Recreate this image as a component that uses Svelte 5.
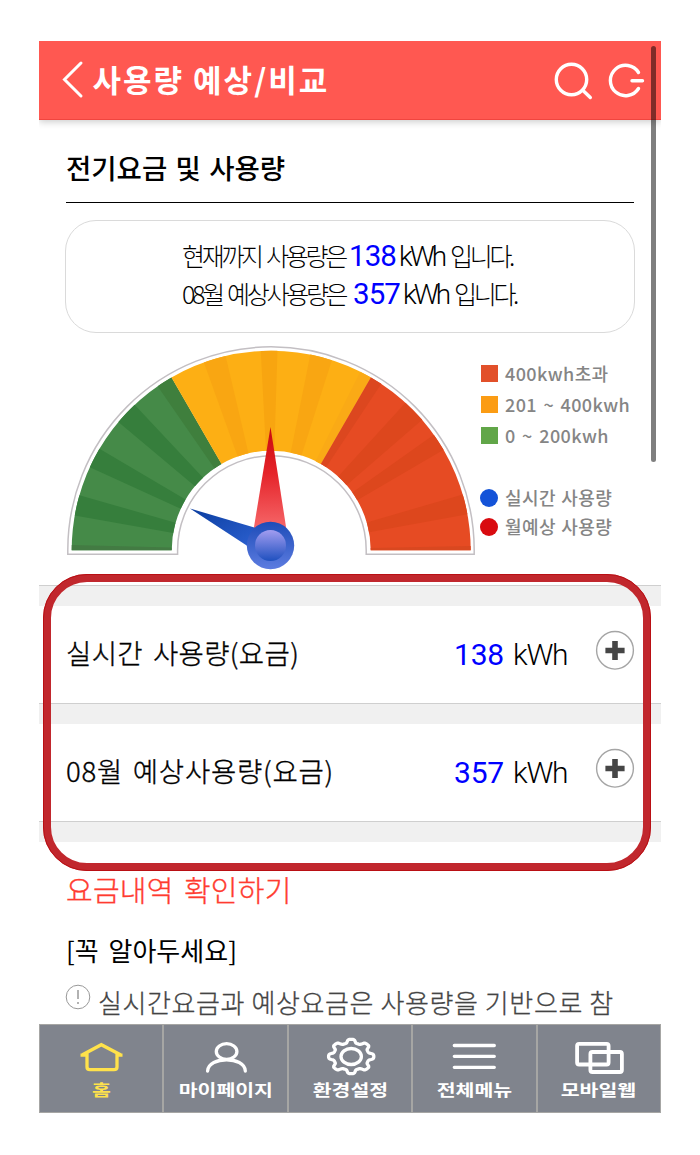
<script>
  const cx = 271.2, cy = 550.2;
  const pt = (r, deg) => {
    const a = (deg * Math.PI) / 180;
    return `${(cx - r * Math.cos(a)).toFixed(2)} ${(cy - r * Math.sin(a)).toFixed(2)}`;
  };
  const sector = (a, b, ro = 199.5, ri = 99.5) =>
    `M${pt(ro, a)}A${ro} ${ro} 0 0 1 ${pt(ro, b)}L${pt(ri, b)}A${ri} ${ri} 0 0 0 ${pt(ri, a)}Z`;

  const sectors = [
    [0, 60, '#458a48'], [0, 1.5, '#437b43'], [10, 16, '#367e3c'], [24.6, 30.6, '#367e3c'], [40, 46.8, '#367e3c'], [55.3, 60, '#3f7f3d'],
    [60, 120, '#fdaf14'], [70.3, 76.8, '#f9a612'], [87, 91.8, '#f8a510'], [101.3, 107.7, '#f9a612'], [116.5, 120, '#faaa16'],
    [120, 180, '#e64b23'], [120, 123.5, '#dc471f'], [132.3, 139.2, '#dd471d'], [144.6, 149.8, '#dd471d'], [163.8, 169.6, '#dd471d'], [178.8, 180, '#d94820']
  ];
  const frame = `M67.8 554.3V550A203.2 203.2 0 0 1 474.2 550V554.3H366.2V550A94.3 94.3 0 0 0 177.6 550V554.3Z`;

  let gear = '';
  for (let i = 0; i < 160; i++) {
    const t = (i / 160) * Math.PI * 2;
    const k = 0.865 + 0.105 * Math.tanh(2 * Math.cos(8 * t));
    gear += `${i ? 'L' : 'M'}${(351 + 23.4 * k * Math.cos(t)).toFixed(2)} ${(1056 + 17.8 * k * Math.sin(t)).toFixed(2)}`;
  }
  gear += 'Z';

  const legend = [
    { c: '#e2502a', t: '400kwh초과' },
    { c: '#fb9c14', t: '201 ~ 400kwh' },
    { c: '#61a648', t: '0 ~ 200kwh' }
  ];
  const dots = [
    { c: '#1453d8', t: '실시간 사용량' },
    { c: '#d90b10', t: '월예상 사용량' }
  ];
  const rows = [
    { label: '실시간 사용량(요금)', value: '138' },
    { label: '08월 예상사용량(요금)', value: '357' }
  ];
  const tabs = ['홈', '마이페이지', '환경설정', '전체메뉴', '모바일웹'];
</script>

<div class="screen">
  <header>
    <svg class="back" width="24" height="40" viewBox="61 61 24 40"><path d="M81 64L64.5 80.5L81 97" /></svg>
    <h1>사용량 예상/비교</h1>
    <svg class="tools" width="94" height="44" viewBox="551 58 94 44">
      <circle cx="571.5" cy="79.5" r="15.2" /><path d="M583 90.5L590.3 97.5" />
      <path d="M638.5 72.5A15.2 15.2 0 1 0 638.5 88.5M632 80.7H642.5" />
    </svg>
  </header>

  <main>
    <h2>전기요금 및 사용량</h2>
    <div class="summary">
      <p><span class="s1">현재까지 사용량은</span><b>138</b><i>kWh</i><span>입니다.</span></p>
      <p><span class="s2">08월 예상사용량은</span><b>357</b><i>kWh</i><span>입니다.</span></p>
    </div>

    <div class="chart">
      <svg width="414" height="245" viewBox="66 340 414 245">
        <defs>
          <linearGradient id="red" x1="0" y1="0" x2="0" y2="1"><stop offset="0" stop-color="#c9080c" /><stop offset=".45" stop-color="#e5242a" /><stop offset="1" stop-color="#f6686a" /></linearGradient>
          <linearGradient id="hub" x1="0" y1="0" x2="0" y2="1"><stop offset="0" stop-color="#1d4cb8" /><stop offset="1" stop-color="#5d7ce0" /></linearGradient>
          <linearGradient id="knob" x1="0" y1="0" x2="0" y2="1"><stop offset="0" stop-color="#a29df0" /><stop offset="1" stop-color="#1f50bf" /></linearGradient>
          <linearGradient id="blue" x1="0" y1="0" x2="1" y2="1"><stop offset="0" stop-color="#0b3ea0" /><stop offset="1" stop-color="#2c60d0" /></linearGradient>
        </defs>
        <path d={frame} fill="#fff" stroke="#c3bfc3" stroke-width="1.5" />
        {#each sectors as [a, b, c]}<path d={sector(a, b)} fill={c} />{/each}
        <path d="M270.5 427L286.5 530H253.5Z" fill="url(#red)" />
        <path d="M190 508.5L256 528L249 547Z" fill="url(#blue)" />
        <circle cx="270.5" cy="545.5" r="23.7" fill="url(#hub)" />
        <circle cx="270.5" cy="545.5" r="15.5" fill="url(#knob)" />
      </svg>
      <ul>
        {#each legend as l}<li><em style:background={l.c}></em>{l.t}</li>{/each}
        {#each dots as l, i}<li class="dot" class:first={i === 0}><em style:background={l.c}></em>{l.t}</li>{/each}
      </ul>
    </div>

    {#each rows as r, i}
      <div class="band"></div>
      <div class="row">
        <span class="label" class:wide={i === 1}>{r.label}</span><b>{r.value}</b><i>kWh</i>
        <svg width="40" height="42" viewBox="0 0 40 42"><ellipse cx="20" cy="20.3" rx="18.4" ry="18.8" fill="#fff" stroke="#a5a5a5" stroke-width="1.4" /><path d="M20 11V30M10.4 20.5H29.6" stroke="#464646" stroke-width="5.6" /></svg>
      </div>
    {/each}
    <div class="band"></div>
    <div class="link">요금내역 확인하기</div>
    <h3>[꼭 알아두세요]</h3>
    <div class="note">
      <svg width="26" height="26" viewBox="0 0 26 26"><circle cx="13" cy="13" r="11.8" fill="none" stroke="#999" /><path d="M13 6V15M13 18V20" stroke="#999" stroke-width="1.5" /></svg>
      <span>실시간요금과 예상요금은 사용량을 기반으로 참</span>
    </div>
  </main>

  <nav>
    {#each tabs as t, i}
      <div class="tab" class:on={i === 0}>
        <svg width="122" height="42" viewBox="{40 + i * 124.4} 1034.5 122 42">
          {#if i === 0}<path d="M80.5 1054.6H87M122.5 1054.6H116M82.5 1054.3L101.3 1044.2L120.5 1054.3M87 1053V1066.5Q87 1069.2 90 1069.2H114Q117 1069.2 117 1066.5V1053" />
          {:else if i === 1}<ellipse cx="226" cy="1051" rx="10.3" ry="7.8" /><path d="M207 1070.5C208 1055.5 244 1055.5 244.7 1070.5" stroke-linecap="round" />
          {:else if i === 2}<path d={gear} /><ellipse cx="351" cy="1056" rx="10.2" ry="8" />
          {:else if i === 3}<path d="M454.5 1045H494.5M454.5 1055.8H494.5M454.5 1066.8H494.5" stroke-linecap="round" />
          {:else}<g stroke-width="3.8"><rect x="576.7" y="1043.3" width="31.5" height="20.7" rx="2" /><rect x="590" y="1051.5" width="31.5" height="20" rx="2" /></g>{/if}
        </svg>
        <span>{t}</span>
      </div>
    {/each}
  </nav>

  <div class="scrollbar"></div>
  <div class="highlight"></div>
</div>

<style>
  :global(body) { background: #fff; }
  .screen {
    position: relative; box-sizing: border-box; width: 622px; height: 1072px; margin: 41px 39px 0;
    display: flex; flex-direction: column; color: #000;
    font-family: "Noto Sans CJK KR", "Noto Sans", sans-serif;
  }
  h1, h2, h3, p, ul { margin: 0; padding: 0; font-weight: 400; }
  header {
    flex: none; height: 79px; box-sizing: border-box; padding: 0 16px 0 22px; display: flex; align-items: center;
    background: #ff5851; border-bottom: 1px solid #f0453f; box-shadow: 0 2px 7px rgba(0, 0, 0, .2); z-index: 1;
    clip-path: inset(0 0 -12px 0);
  }
  header svg { fill: none; stroke: #fff; stroke-width: 3.4; stroke-linecap: round; }
  header .back { stroke-width: 3; }
  h1 { flex: 1; margin-left: 7.5px; color: #fff; font-weight: 700; font-size: 31px; letter-spacing: 2px; word-spacing: 0; line-height: 76px; height: 79px; }
  main { flex: 1; min-height: 0; overflow: hidden; display: flex; flex-direction: column; }
  main > * { flex: none; }
  h2 { margin: 0 27px; height: 83px; line-height: 94px; font-size: 27.5px; font-weight: 500; word-spacing: 2.2px; border-bottom: 1px solid #000; box-sizing: border-box; }
  .summary {
    box-sizing: border-box; height: 113px; margin: 17px 26px 0; border: 1.5px solid #dadada; border-radius: 31px;
    padding: 15px 0 0 116px; font-size: 25px; letter-spacing: -3.3px; word-spacing: 3px;
  }
  p { display: flex; align-items: baseline; height: 38px; line-height: 38px; white-space: nowrap; font-weight: 300; }
  .s1 { width: 167px; }
  .s2 { width: 171px; }
  b, i { font-family: Roboto, sans-serif; font-style: normal; }
  b { font-weight: 400; color: #00f; }
  p b { width: 50px; font-size: 29.5px; letter-spacing: -.9px; }
  p i { width: 51px; font-size: 28px; letter-spacing: -3px; }
  .chart { height: 245px; margin: 7px 0 0 27px; display: flex; }
  .chart svg { overflow: visible; }
  ul { list-style: none; padding-top: 17px; }
  li { display: flex; align-items: center; height: 31px; font-size: 18px; font-weight: 500; color: #858585; white-space: nowrap; letter-spacing: .4px; word-spacing: 2px; }
  em { width: 17px; height: 17px; margin: 0 7px 0 1px; position: relative; top: 1px; }
  .dot { height: 29px; letter-spacing: .5px; word-spacing: .5px; }
  .first { margin-top: 32px; }
  .dot em { width: 18px; height: 18px; margin: 0 7px 0 0; border-radius: 50%; }
  .band { height: 21px; box-sizing: border-box; background: #f0f0f0; border-top: 1px solid #cfcfcf; }
  .row { height: 97px; padding: 0 26px 0 27px; display: flex; align-items: center; font-size: 27.5px; font-weight: 300; }
  .label { flex: 1; letter-spacing: .35px; word-spacing: 3.5px; margin-top: -5px; -webkit-text-stroke: .35px #000; }
  .wide { letter-spacing: .75px; word-spacing: 3px; }
  .row b { width: 59px; font-size: 30px; letter-spacing: -.2px; margin-top: -1px; }
  .row i { width: 82px; font-size: 30px; letter-spacing: -1.3px; margin-top: -1px; }
  .row svg { margin-top: -8px; }
  .link { margin: 15px 27px 0; height: 64px; line-height: 64px; font-size: 29px; font-weight: 300; color: #ff3b30; word-spacing: 3.5px; letter-spacing: .25px; -webkit-text-stroke: .35px #ff3b30; }
  h3 { margin: 0 27px; height: 58px; line-height: 58px; font-size: 26px; word-spacing: 4px; }
  .note { margin: 0 26px; display: flex; font-size: 26px; line-height: 45px; height: 50px; font-weight: 300; color: #444; white-space: nowrap; letter-spacing: .6px; -webkit-text-stroke: .3px #444; }
  .note svg { margin: 5px 7px 0 0; }
  nav { flex: none; height: 89px; box-sizing: border-box; display: flex; background: #80848d; border: 1px solid #a6a6a4; z-index: 1; }
  .tab { flex: 1; display: flex; flex-direction: column; align-items: center; padding-top: 10px; color: #fff; border-left: 2px solid #a6a6a4; box-sizing: border-box; }
  .tab:first-child { border-left: 0; }
  .tab svg { flex: none; fill: none; stroke: currentColor; stroke-width: 3.3; }
  .tab span { font-size: 16px; line-height: 25px; font-weight: 700; transform: scaleX(1.28); }
  .on { color: #ffe24b; }
  .scrollbar { position: absolute; z-index: 2; left: 612px; top: 5px; width: 5px; height: 416px; border-radius: 3px; background: rgba(0, 0, 0, .5); }
  .highlight { position: absolute; z-index: 2; left: 4px; top: 533px; width: 608px; height: 297px; box-sizing: border-box; border: 8px solid #c1272d; border-radius: 44px; outline: 1px solid #b90f14; outline-offset: -1px; }
</style>
